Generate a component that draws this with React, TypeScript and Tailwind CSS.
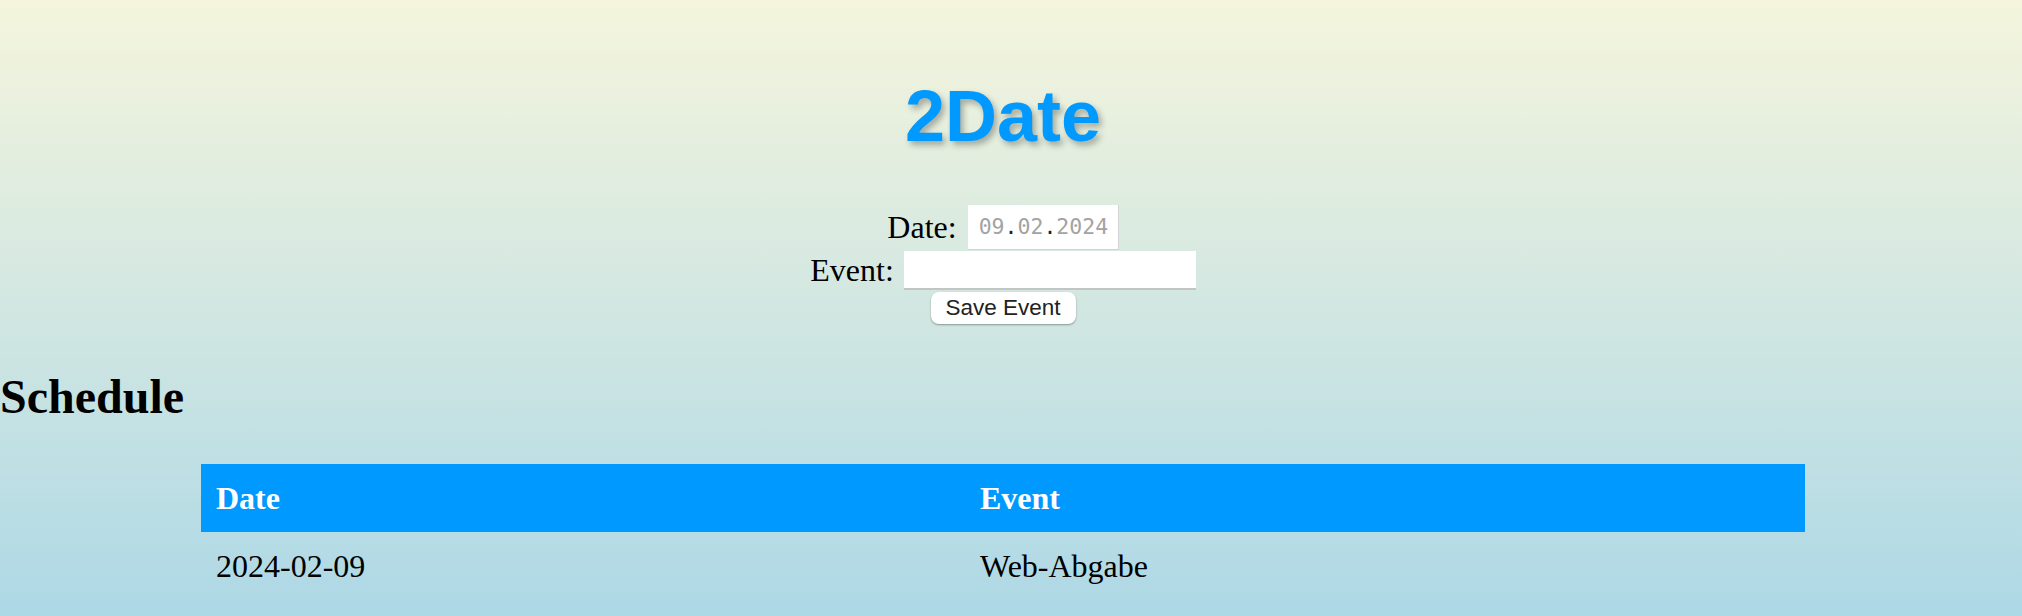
export default function App() {
  return (
    <main className="min-h-screen w-full bg-linear-to-b from-[#f5f5dc] to-[#add8e6] text-black">
      <div className="w-[2006px] font-['Liberation_Serif',serif]">
        <h1 className="pt-[80px] text-center font-['Liberation_Sans',Arial,sans-serif] text-[72px] leading-[72px] font-bold text-[#0099ff] [text-shadow:3px_4px_6px_rgba(0,0,0,0.3)]">
          2Date
        </h1>

        <form className="mt-[53px] flex flex-col items-center">
          <div className="flex h-[45px] items-center justify-center gap-[11px]">
            <label className="text-[32px] leading-[45px]">Date:</label>
            <div className="flex h-[45px] w-[151px] items-center border-r border-b border-[#d4d4d4] bg-white pl-[11px] font-['DejaVu_Sans_Mono',monospace] text-[21.5px] text-[#a3a3a3]">
              09<span className="text-[#222]">.</span>02<span className="text-[#222]">.</span>2024
            </div>
          </div>
          <div className="mt-[1px] flex h-[39px] items-center justify-center gap-[10px]">
            <label className="text-[32px] leading-[39px]">Event:</label>
            <input
              type="text"
              className="h-[39px] w-[292px] border-b-2 border-[#c4c4c4] bg-white outline-none"
            />
          </div>
          <button
            type="button"
            className="mt-[2px] h-[32px] w-[145px] rounded-[8px] bg-white font-['Liberation_Sans',Arial,sans-serif] text-[22.5px] leading-[32px] text-[#222] shadow-[0_1px_2px_rgba(0,0,0,0.35)]"
          >
            Save Event
          </button>
        </form>

        <h2 className="mt-[46px] text-[48px] leading-[53px] font-bold">Schedule</h2>

        <table className="mt-[41px] ml-[201px] w-[1604px] table-fixed border-collapse text-[32px]">
          <thead>
            <tr className="bg-[#0099ff] text-white">
              <th className="h-[68px] w-[764px] px-[15px] py-0 text-left align-middle leading-[37px] font-bold">
                Date
              </th>
              <th className="h-[68px] px-[15px] py-0 text-left align-middle leading-[37px] font-bold">
                Event
              </th>
            </tr>
          </thead>
          <tbody>
            <tr>
              <td className="h-[68px] px-[15px] py-0 align-middle leading-[37px]">2024-02-09</td>
              <td className="h-[68px] px-[15px] py-0 align-middle leading-[37px]">Web-Abgabe</td>
            </tr>
          </tbody>
        </table>
      </div>
    </main>
  );
}
